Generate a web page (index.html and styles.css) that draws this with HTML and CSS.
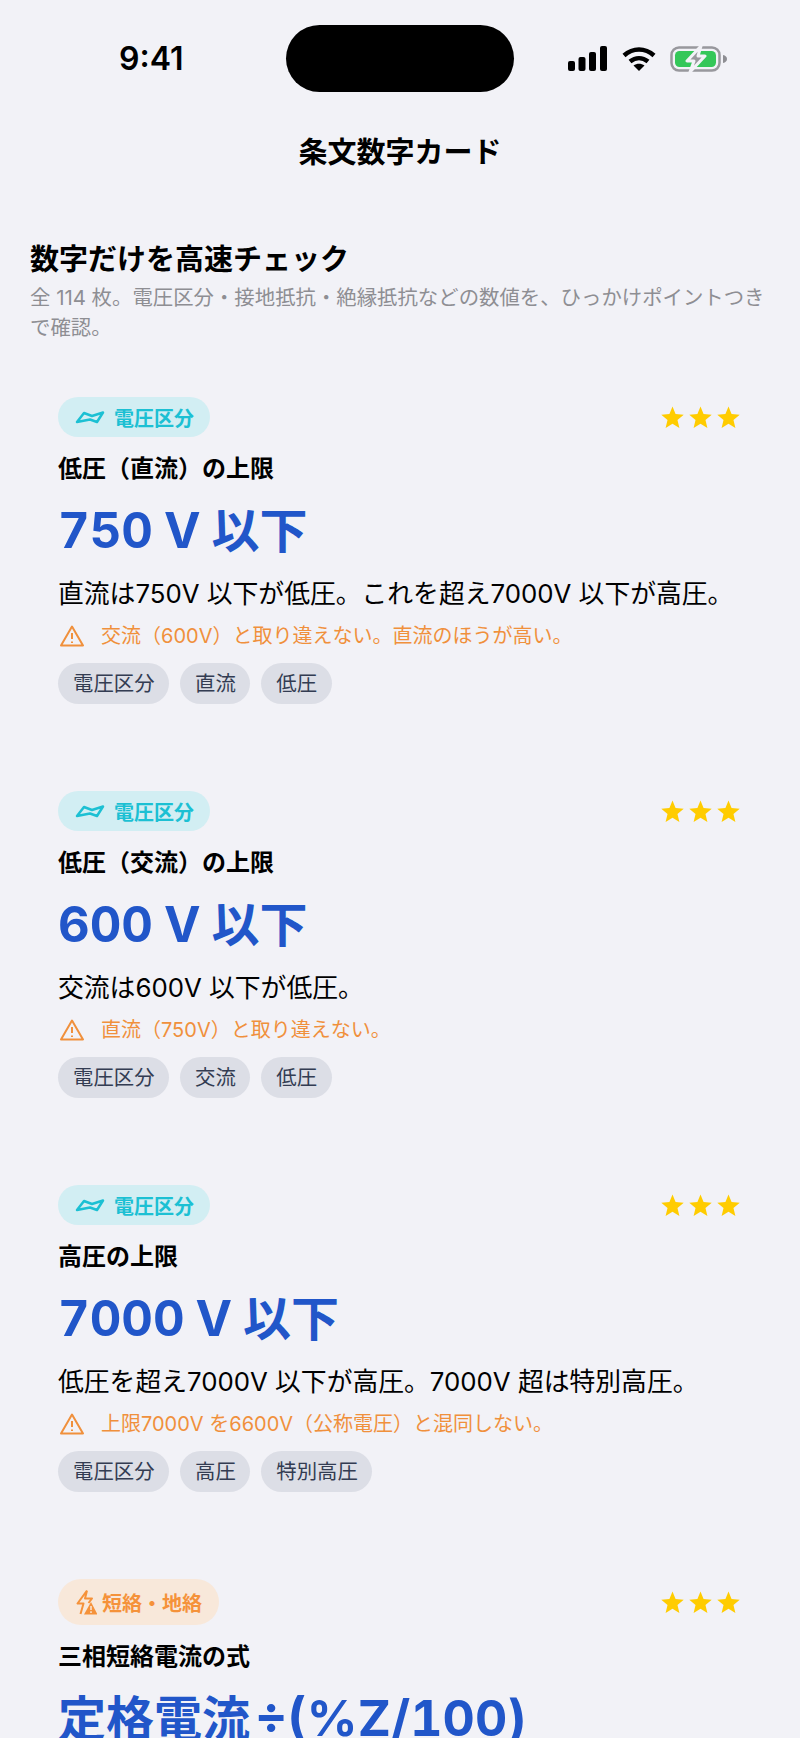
FILE: index.html
```html
<!DOCTYPE html>
<html lang="ja">
<head>
  <meta charset="UTF-8" />
  <title>条文数字カード</title>
  <link rel="stylesheet" href="styles.css">
</head>
<body>
  <svg width="0" height="0" class="defs">
    <symbol id="star" viewBox="0 0 24 23"><path d="M12 0L15.200 7.900L23.700 8.500L17.200 14L19.200 22.400L12 17.900L4.800 22.400L6.800 14L0.300 8.500L8.800 7.900Z" /></symbol>
    <symbol id="wave" viewBox="0 0 30 14"><path d="M2 12L9 3L17 6L28 2.500L22 12L15 9.500Z" /></symbol>
    <symbol id="warn" viewBox="0 0 24 22"><path d="M12 1.500L23 20.500H1Z" /><path d="M12 8V14M12 16.500V18" /></symbol>
  </svg>

  <div class="status">
    <span class="time">9:41</span>
    <div class="island"></div>
    <div class="status-icons">
      <svg class="signal" width="39" height="25" viewBox="0 0 39 25">
        <rect x="0" y="15" width="7" height="10" rx="2" />
        <rect x="10.500" y="11" width="7" height="14" rx="2" />
        <rect x="21" y="6" width="7" height="19" rx="2" />
        <rect x="32" y="0" width="7" height="25" rx="2" />
      </svg>
      <svg class="wifi" width="34" height="25" viewBox="0 0 34 25">
        <path d="M2 9.500C11 1.500 23 1.500 32 9.500" fill="none" stroke="#000" stroke-width="4.500" />
        <path d="M8 15.500C13.500 11 20.500 11 26 15.500" fill="none" stroke="#000" stroke-width="4.500" />
        <path d="M17 25L11.500 19.500C15 17 19 17 22.500 19.500Z" />
      </svg>
      <svg class="battery" width="57" height="26" viewBox="0 0 57 26">
        <rect x="1.500" y="1.500" width="48" height="23" rx="7.500" fill="none" stroke="#98989d" stroke-width="2.500" />
        <rect x="5" y="5" width="41" height="16" rx="4.500" fill="#34c759" />
        <path d="M53 9C55.500 9.500 57 11 57 13C57 15 55.500 16.500 53 17Z" fill="#8e8e93" />
        <path d="M31 0L17 15H24L20 26L35 10H28Z" fill="#98989d" stroke="#f2f2f7" stroke-width="3" stroke-linejoin="round" />
      </svg>
    </div>
  </div>

  <h1 class="nav-title">条文数字カード</h1>

  <section class="intro">
    <h2>数字だけを高速チェック</h2>
    <p>全 114 枚。電圧区分・接地抵抗・絶縁抵抗などの数値を、ひっかけポイントつきで確認。</p>
  </section>

  <article class="card">
    <div class="card-top">
      <span class="pill pill-cyan"><svg class="wave" width="30" height="14"><use href="#wave" /></svg>電圧区分</span>
      <span class="stars"><svg width="23" height="23"><use href="#star" /></svg><svg width="23" height="23"><use href="#star" /></svg><svg width="23" height="23"><use href="#star" /></svg></span>
    </div>
    <h3>低圧（直流）の上限</h3>
    <div class="value"><span class="latin">750</span> <span class="latin">V</span> 以下</div>
    <p class="desc">直流は750V 以下が低圧。これを超え7000V 以下が高圧。</p>
    <p class="warn"><svg class="warn-icon" width="24" height="22"><use href="#warn" /></svg>交流（600V）と取り違えない。直流のほうが高い。</p>
    <div class="chips"><span>電圧区分</span><span>直流</span><span>低圧</span></div>
  </article>

  <article class="card">
    <div class="card-top">
      <span class="pill pill-cyan"><svg class="wave" width="30" height="14"><use href="#wave" /></svg>電圧区分</span>
      <span class="stars"><svg width="23" height="23"><use href="#star" /></svg><svg width="23" height="23"><use href="#star" /></svg><svg width="23" height="23"><use href="#star" /></svg></span>
    </div>
    <h3>低圧（交流）の上限</h3>
    <div class="value"><span class="latin">600</span> <span class="latin">V</span> 以下</div>
    <p class="desc">交流は600V 以下が低圧。</p>
    <p class="warn"><svg class="warn-icon" width="24" height="22"><use href="#warn" /></svg>直流（750V）と取り違えない。</p>
    <div class="chips"><span>電圧区分</span><span>交流</span><span>低圧</span></div>
  </article>

  <article class="card">
    <div class="card-top">
      <span class="pill pill-cyan"><svg class="wave" width="30" height="14"><use href="#wave" /></svg>電圧区分</span>
      <span class="stars"><svg width="23" height="23"><use href="#star" /></svg><svg width="23" height="23"><use href="#star" /></svg><svg width="23" height="23"><use href="#star" /></svg></span>
    </div>
    <h3>高圧の上限</h3>
    <div class="value"><span class="latin">7000</span> <span class="latin">V</span> 以下</div>
    <p class="desc">低圧を超え7000V 以下が高圧。7000V 超は特別高圧。</p>
    <p class="warn"><svg class="warn-icon" width="24" height="22"><use href="#warn" /></svg>上限7000V を6600V（公称電圧）と混同しない。</p>
    <div class="chips"><span>電圧区分</span><span>高圧</span><span>特別高圧</span></div>
  </article>

  <article class="card card-last">
    <div class="card-top">
      <span class="pill pill-orange">
        <svg width="22" height="26" viewBox="0 0 22 26">
          <path d="M12 1.500L2.500 14.500H8.500L5.500 25M12 1.500L10 9.500H17L13.500 14" fill="none" stroke="#f5923a" stroke-width="2" stroke-linejoin="round" />
          <path d="M16 13L22.500 25.500H9Z" fill="#f5923a" />
          <path d="M16 17V21M16 22.300V24" stroke="#f8e8da" stroke-width="1.500" />
        </svg>短絡・地絡</span>
      <span class="stars"><svg width="23" height="23"><use href="#star" /></svg><svg width="23" height="23"><use href="#star" /></svg><svg width="23" height="23"><use href="#star" /></svg></span>
    </div>
    <h3>三相短絡電流の式</h3>
    <div class="value">定格電流<span class="latin formula">÷(%Z/100)</span></div>
  </article>
</body>
</html>
```

FILE: styles.css
```css
body {
  margin: 0;
  height: 1738px;
  overflow: hidden;
  background: #f2f2f7;
  color: #000;
  font-family: Inter, "Noto Sans CJK JP", sans-serif;
}

h1, h2, h3, p {
  margin: 0;
}

.defs {
  position: absolute;
}

.status {
  position: relative;
  height: 133px;
}

.time {
  position: absolute;
  left: 119px;
  top: 40px;
  font-size: 32px;
  line-height: 38px;
  font-weight: 600;
}

.island {
  position: absolute;
  left: 286px;
  top: 25px;
  width: 228px;
  height: 67px;
  border-radius: 34px;
  background: #000;
}

.status-icons {
  position: absolute;
  left: 568px;
  top: 46px;
  display: flex;
  gap: 15px;
}

.wifi {
  margin-right: -1px;
}

.nav-title {
  text-align: center;
  font-size: 29px;
  line-height: 40px;
  font-weight: 700;
}

.intro {
  padding: 67px 30px 0;
}

.intro h2 {
  font-size: 29px;
  line-height: 40px;
  font-weight: 700;
}

.intro p {
  margin-top: 3px;
  font-size: 20.400px;
  line-height: 30px;
  color: #8e8e93;
}

.card {
  height: 394px;
  margin: 0 60px 0 58px;
}

.intro + .card {
  margin-top: 54px;
}

.card-last {
  height: auto;
}

.card-top {
  display: flex;
  justify-content: space-between;
  align-items: center;
}

.pill {
  display: inline-flex;
  align-items: center;
  gap: 9px;
  height: 40px;
  border-radius: 20px;
  font-size: 20px;
  font-weight: 600;
}

.pill-cyan {
  padding: 0 16px 0 17px;
  background: #d2eef3;
  color: #1cc0d3;
}

.pill-orange {
  gap: 5px;
  height: 46px;
  border-radius: 23px;
  padding: 0 17px;
  background: #f8e8da;
  color: #f5923a;
}

.wave {
  fill: none;
  stroke: #1cc0d3;
  stroke-width: 2.500;
  stroke-linejoin: round;
}

.stars {
  display: flex;
  gap: 5px;
  fill: #ffcc00;
}

.card h3 {
  margin-top: 15px;
  font-size: 24px;
  line-height: 34px;
  font-weight: 600;
}

.value {
  margin-top: 11px;
  font-size: 48px;
  line-height: 68px;
  font-weight: 700;
  word-spacing: -2px;
  color: #2156c9;
  font-variant-numeric: tabular-nums;
}

.latin {
  font-size: 49px;
  line-height: 1;
}

.formula {
  margin-left: 5px;
  font-size: 50px;
}

.desc {
  margin-top: 12px;
  font-size: 25.800px;
  line-height: 34px;
}

.warn {
  display: flex;
  align-items: center;
  gap: 17px;
  margin-top: 10px;
  padding-left: 2px;
  font-size: 20px;
  line-height: 30px;
  color: #f0903c;
}

.warn-icon {
  fill: none;
  stroke: #f0903c;
  stroke-width: 2;
  stroke-linejoin: round;
}

.chips {
  display: flex;
  gap: 11px;
  margin-top: 12px;
}

.chips span {
  height: 41px;
  line-height: 41px;
  padding: 0 14.500px 0 15px;
  border-radius: 21px;
  background: #dcdee6;
  color: #333c52;
  font-size: 20.400px;
}
```
